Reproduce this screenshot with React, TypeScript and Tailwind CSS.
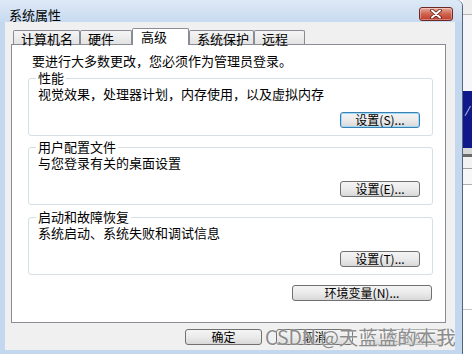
import React from "react";

function Btn({
  children,
  w = 80,
  focused = false,
  disabled = false,
}: {
  children: React.ReactNode;
  w?: number;
  focused?: boolean;
  disabled?: boolean;
}) {
  const base =
    "h-[16px] rounded-[3px] border text-[12px] leading-[14px] flex items-center justify-center bg-gradient-to-b from-[#f4f4f4] via-[#ebebeb] to-[#d8d8d8] shrink-0";
  const cls = focused
    ? "border-[#3c7fb1] shadow-[inset_0_0_0_1px_#9edbf7] text-black"
    : disabled
    ? "border-[#adb2b5] text-[#8a8a8a]"
    : "border-[#707070] text-black";
  return (
    <div className={`${base} ${cls}`} style={{ width: w }}>
      {children}
    </div>
  );
}

function Group({
  title,
  text,
  button,
  focused,
  mt,
}: {
  title: string;
  text: string;
  button: string;
  focused?: boolean;
  mt: string;
}) {
  return (
    <fieldset
      className={`${mt} ml-[16px] mr-[12px] border border-[#d5dfe5] rounded-[3px] pb-[7px]`}
    >
      <legend className="ml-[7px] px-[2px] text-[13px] leading-[14px] text-black">
        {title}
      </legend>
      <div className="pl-[9px] pt-[1px] text-[13px] leading-[15px] text-black">{text}</div>
      <div className="flex justify-end mr-[12px] mt-[11px]">
        <Btn focused={focused}>{button}</Btn>
      </div>
    </fieldset>
  );
}

function Tab({
  label,
  w,
  selected = false,
}: {
  label: string;
  w: number;
  selected?: boolean;
}) {
  if (selected) {
    return (
      <div
        className="h-[17px] border border-b-0 border-[#898c95] bg-white rounded-t-[2px] pl-[8px] text-[13px] leading-[13px] pt-[1px] text-black shrink-0"
        style={{ width: w }}
      >
        {label}
      </div>
    );
  }
  return (
    <div
      className="h-[14px] mb-px border border-b-0 border-[#898c95] bg-gradient-to-b from-[#f5f5f5] to-[#e3e3e3] rounded-t-[2px] pl-[7px] text-[13px] leading-[13px] pt-[1px] text-black shrink-0"
      style={{ width: w }}
    >
      {label}
    </div>
  );
}

export default function App() {
  return (
    <div className="w-[472px] h-[354px] flex bg-white overflow-hidden relative font-['Noto_Sans_CJK_SC',sans-serif]">
      {/* window */}
      <div className="w-[463px] h-full flex flex-col bg-[#c3d8ee] border-r border-[#55657a] rounded-tr-[6px] shrink-0">
        {/* title bar */}
        <div className="h-[22px] flex items-start justify-between pl-[9px] pr-[9px] bg-gradient-to-b from-[#dde9f6] to-[#c8dbf0] rounded-tr-[6px]">
          <span className="text-[13px] leading-[14px] mt-[8px] text-black">系统属性</span>
          <div className="mt-[7px] w-[34px] h-[14px] rounded-[3px] border border-[#6d2a22] bg-gradient-to-b from-[#e8a89c] via-[#d0634f] to-[#c0392b] flex items-center justify-center relative z-20 shadow-[inset_0_0_0_1px_rgba(255,255,255,0.35)]">
            <svg width="14" height="10" viewBox="0 0 14 10">
              <path d="M3 1.5 L11 8.5 M11 1.5 L3 8.5" stroke="#5a1a14" strokeWidth="3.6" strokeLinecap="round" />
              <path d="M3 1.5 L11 8.5 M11 1.5 L3 8.5" stroke="#ffffff" strokeWidth="2" strokeLinecap="round" />
            </svg>
          </div>
        </div>
        {/* client */}
        <div className="flex-1 ml-[5px] mr-[7px] mb-[4px] bg-[#f0f0f0] flex flex-col pt-[6px]">
          {/* tabs */}
          <div className="flex items-end ml-[8px] h-[17px] relative z-10 -mb-px">
            <Tab label="计算机名" w={67} />
            <Tab label="硬件" w={52} />
            <Tab label="高级" w={57} selected />
            <Tab label="系统保护" w={65} />
            <Tab label="远程" w={51} />
          </div>
          {/* panel */}
          <div className="ml-[6px] w-[435px] h-[279px] border border-[#898c95] bg-white flex flex-col">
            <div className="pt-[8px] pl-[20px] text-[13px] leading-[16px] text-black">
              要进行大多数更改，您必须作为管理员登录。
            </div>
            <Group
              mt="mt-[2px]"
              title="性能"
              text="视觉效果，处理器计划，内存使用，以及虚拟内存"
              button="设置(S)..."
              focused
            />
            <Group
              mt="mt-[4px]"
              title="用户配置文件"
              text="与您登录有关的桌面设置"
              button="设置(E)..."
            />
            <Group
              mt="mt-[5px]"
              title="启动和故障恢复"
              text="系统启动、系统失败和调试信息"
              button="设置(T)..."
            />
            <div className="flex justify-end mr-[13px] mt-[10px]">
              <Btn w={140}>环境变量(N)...</Btn>
            </div>
          </div>
          {/* bottom buttons */}
          <div className="flex justify-end gap-[14px] pr-[11px] mt-[6px]">
            <Btn w={77}>确定</Btn>
            <Btn w={77}>取消</Btn>
            <Btn w={77} disabled>
              应用(A)
            </Btn>
          </div>
        </div>
      </div>
      {/* background window strip */}
      <div className="flex-1 flex flex-col bg-white">
        <div className="h-[15px] bg-[#eeeeee] border-b border-[#b5b5b5]" />
        <div className="h-[76px] bg-[#f6f6fa]" />
        <div className="h-[57px] bg-[#10198a] flex items-start pt-[14px] pl-[2px]">
          <span className="text-white text-[10px] leading-[10px] italic">/</span>
        </div>
        <div className="h-[6px] bg-[#d8d8d8]" />
        <div className="h-[3px] bg-[#6a6a6a]" />
        <div className="h-[12px] bg-[#f2f2f2] border-b border-[#a0a0a0]" />
        <div className="h-[16px] bg-[#f7f7f7] border-b border-[#b0b0b0]" />
        <div className="h-[125px] bg-white border-b border-[#c8c8c8]" />
        <div className="flex-1 bg-white" />
      </div>
      {/* watermark */}
      <div className="absolute left-[265px] top-[326px] text-[19.5px] leading-[22px] text-[#8c8c8c] [text-shadow:0_0_2px_#ffffff] pointer-events-none whitespace-nowrap">
        CSDN @天蓝蓝的本我
      </div>
    </div>
  );
}
